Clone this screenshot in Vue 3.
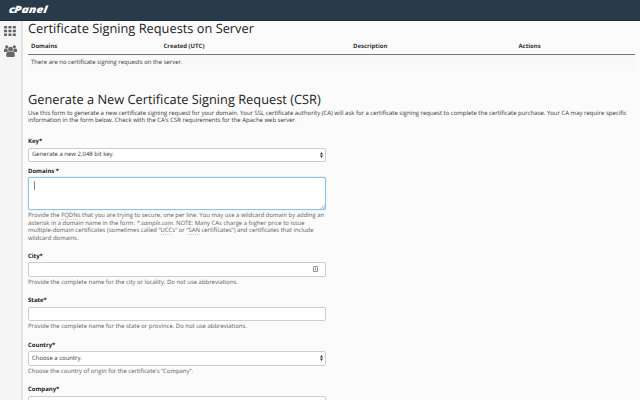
<script setup>
const columns = ['Domains', 'Created (UTC)', 'Description', 'Actions']
const dots = [0, 1, 2].flatMap((r) => [0, 1, 2].map((c) => ({ x: c * 4.4, y: r * 3.7 })))
</script>

<template>
  <div class="page">
    <header class="topbar"><span class="logo"><span class="c">c</span>Panel</span></header>
    <div class="body">
      <nav class="side">
        <svg class="grid" viewBox="0 0 12 10" width="12" height="10">
          <rect v-for="(d, i) in dots" :key="i" :x="d.x" :y="d.y" width="3.1" height="2.5" rx=".4" />
        </svg>
        <svg class="users" viewBox="0 0 13 12" width="13" height="12">
          <circle cx="2.7" cy="1.8" r="1.6" /><circle cx="10.3" cy="1.8" r="1.6" />
          <path d="M0 6.8V5Q0 3.3 1.2 3.4Q2.5 4.2 3.6 3.6Q3.1 5.3 4.1 6.1Q3 6.3 2.5 7H1Q0 7 0 6.8ZM13 6.8V5Q13 3.3 11.8 3.4Q10.5 4.2 9.4 3.6Q9.9 5.3 8.9 6.1Q10 6.3 10.5 7H12Q13 7 13 6.8Z" />
          <circle cx="6.5" cy="4.2" r="2.4" />
          <path d="M2.2 10.5Q2.2 6.4 4.4 6.3Q6.5 7.8 8.6 6.3Q10.8 6.4 10.8 10.5Q10.7 12 9.2 12H3.8Q2.3 12 2.2 10.5Z" />
        </svg>
      </nav>
      <main class="content">
        <h1 class="t1">Certificate Signing Requests on Server</h1>
        <div class="thead"><b v-for="c in columns" :key="c">{{ c }}</b></div>
        <div class="empty">There are no certificate signing requests on the server.</div>
        <h1 class="t2">Generate a New Certificate Signing Request (CSR)</h1>
        <p class="intro">Use this form to generate a new certificate signing request for your domain. Your SSL certificate authority (CA) will ask for a certificate signing request to complete the certificate purchase. Your CA may require specific<br>information in the form below. Check with the CA’s CSR requirements for the Apache web server.</p>

        <section class="field key">
          <label>Key*</label>
          <div class="box select"><span>Generate a new 2,048 bit key.</span>
            <svg width="3" height="6" viewBox="0 0 3 6"><path d="M0 2.5L1.5 0L3 2.5ZM0 3.5L1.5 6L3 3.5Z" /></svg>
          </div>
        </section>
        <section class="field domains">
          <label>Domains *</label>
          <div class="box area"><i class="caret"></i>
            <svg width="5" height="5" viewBox="0 0 5 5"><path d="M.5 5L5 .5M3 5L5 3" /></svg>
          </div>
          <p class="help">Provide the <u>FQDN</u>s that you are trying to secure, one per line. You may use a wildcard domain by adding an<br>asterisk in a domain name in the form: <em>*.sample.com</em>. NOTE: Many <u>CA</u>s charge a higher price to issue<br>multiple-domain certificates (sometimes called “<u>UCC</u>s” or “<u>SAN</u> certificates”) and certificates that include<br>wildcard domains.</p>
        </section>
        <section class="field">
          <label>City*</label>
          <div class="box city">
            <svg width="5" height="6" viewBox="0 0 5 6"><rect x=".5" y=".5" width="4" height="5" rx=".5" /><path d="M2.5 1.5V4.5" /></svg>
          </div>
          <p class="help">Provide the complete name for the city or locality. Do not use abbreviations.</p>
        </section>
        <section class="field">
          <label>State*</label>
          <div class="box"></div>
          <p class="help">Provide the complete name for the state or province. Do not use abbreviations.</p>
        </section>
        <section class="field">
          <label>Country*</label>
          <div class="box select"><span>Choose a country.</span>
            <svg width="3" height="6" viewBox="0 0 3 6"><path d="M0 2.5L1.5 0L3 2.5ZM0 3.5L1.5 6L3 3.5Z" /></svg>
          </div>
          <p class="help">Choose the country of origin for the certificate’s “Company”.</p>
        </section>
        <section class="field">
          <label>Company*</label>
          <div class="box"></div>
        </section>
      </main>
    </div>
  </div>
</template>

<style>
body { margin: 0; overflow: hidden; background: #fbfbfb; }
</style>
<style scoped>
* { box-sizing: border-box; }
.page { width: 640px; height: 400px; overflow: hidden; background: #fbfbfb; color: #333; font: 5.98px/7.4px "Open Sans", sans-serif; display: flex; flex-direction: column; text-rendering: geometricPrecision; }
.topbar { height: 21px; flex: none; background: #293a4a; border-bottom: 1px solid #1b2d40; padding: 2px 0 0 9px; }
.logo { display: inline-block; color: #fff; font: italic 800 10px/14px "Open Sans", sans-serif; transform-origin: left; transform: scaleX(1.2) skewX(-6deg); }
.c { margin-right: -.6px; }
.body { flex: 1; min-height: 0; display: flex; }
.side { width: 23px; flex: none; background: #f5f5f5; border-right: 2px solid #e2e2e2; padding: 5px 0 0 4px; display: flex; flex-direction: column; gap: 9px; }
.side svg { display: block; flex: none; fill: #666; }
.content { flex: 1; min-width: 0; padding-left: 5px; white-space: nowrap; }
h1 { margin: 0; font-weight: 400; font-size: 12.82px; color: #222; }
.t1 { height: 18px; line-height: 14px; }
.thead { width: 607px; height: 16px; padding: 4px 0 0 3px; border-bottom: 1px solid #777; display: grid; grid-template-columns: 132.5px 189.5px 165.5px 1fr; }
.empty { width: 607px; height: 16px; padding: 4px 0 0 3px; background: #f9f9f9; }
.t2 { margin-top: 19px; height: 18px; line-height: 18px; }
.intro { margin: 0; padding-top: 2px; height: 30px; }
.field { width: 297.5px; height: 44.5px; display: flex; flex-direction: column; }
.key { height: 29.5px; }
.domains { height: 85px; }
label { height: 9.5px; flex: none; font-weight: 700; color: #222; }
.box { height: 14.5px; flex: none; border: 1px solid #cdcdcd; border-radius: 2px; background: #fff; display: flex; align-items: center; justify-content: space-between; padding: 0 1.5px 0 3px; }
.box svg { display: block; fill: #333; }
.area { height: 33px; border-color: #8fc5ec; box-shadow: 0 0 1px #72b7e8; align-items: flex-end; padding: 0; }
.caret { align-self: flex-start; width: 1px; height: 9px; margin: 3px 0 0 5px; background: #888; }
.area svg { fill: none; stroke: #777; stroke-width: .6; }
.city { justify-content: flex-end; padding-right: 7px; }
.city svg { fill: none; stroke: #777; stroke-width: .8; }
.help { margin: 0; padding-top: 2.4px; color: #5b5b5b; font-size: 5.94px; }
u { text-decoration: none; border-bottom: 1px dotted #ccc; }
</style>
